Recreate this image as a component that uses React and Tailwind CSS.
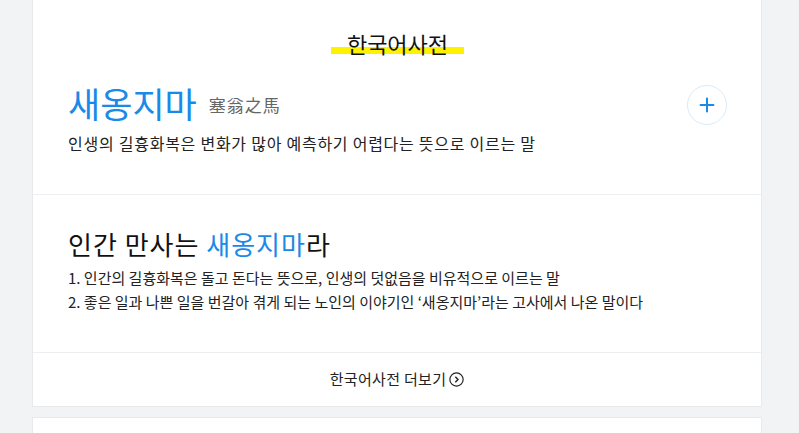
import { Plus } from 'lucide-react'

const FONT = { fontFamily: '"Noto Sans CJK KR", "Noto Sans", sans-serif' }

function MoreIcon() {
  return (
    <svg width="15" height="15" viewBox="0 0 14 14" fill="none" className="ml-[3px]">
      <circle cx="7" cy="7" r="6.2" stroke="#222" strokeWidth="1.1" />
      <path d="M5.9 4.4 L8.4 7 L5.9 9.6" stroke="#222" strokeWidth="1.3" />
    </svg>
  )
}

export default function App() {
  return (
    <div className="min-h-[433px] bg-[#f2f3f5]" style={FONT}>
      <div className="ml-[32px] w-[730px] bg-white border-x border-b border-[#e7e9ec]">
        <div className="pl-[35px] pr-[34px] pt-[29px] pb-[39px] border-b border-[#eceef0]">
          <div className="flex justify-center">
            <h2 className="relative px-[16px] text-[22px] leading-[28px] text-[#111]">
              <span className="absolute left-0 right-0 top-[18px] h-[7px] bg-[#fff200]" />
              <span className="relative">한국어사전</span>
            </h2>
          </div>
          <div className="mt-[23px] flex items-center justify-between">
            <div className="flex items-center">
              <span className="text-[35px] leading-[46px] text-[#1a8ae8]">새옹지마</span>
              <span className="ml-[12px] mt-[3px] text-[17px] leading-[22px] tracking-[1px] text-[#666]">塞翁之馬</span>
            </div>
            <button className="w-[40px] h-[40px] rounded-full border border-[#d9ebfa] flex items-center justify-center mt-[4px]">
              <Plus size={22} strokeWidth={2.2} color="#1a8ae8" />
            </button>
          </div>
          <p className="mt-[5px] text-[16px] leading-[24px] text-[#222] tracking-[0.75px]">
            인생의 길흉화복은 변화가 많아 예측하기 어렵다는 뜻으로 이르는 말
          </p>
        </div>
        <div className="px-[35px] pt-[31px] pb-[38px] border-b border-[#eceef0]">
          <h3 className="text-[26px] leading-[36px] text-[#111] tracking-[1px]">
            인간 만사는 <span className="text-[#1a8ae8]">새옹지마</span>라
          </h3>
          <ol className="mt-[4px] text-[15px] leading-[24px] text-[#222]">
            <li>1. 인간의 길흉화복은 돌고 돈다는 뜻으로, 인생의 덧없음을 비유적으로 이르는 말</li>
            <li>2. 좋은 일과 나쁜 일을 번갈아 겪게 되는 노인의 이야기인 ‘새옹지마’라는 고사에서 나온 말이다</li>
          </ol>
        </div>
        <div className="h-[53px] flex items-center justify-center text-[15px] text-[#222] tracking-[0.3px]">
          한국어사전 더보기
          <MoreIcon />
        </div>
      </div>
      <div className="ml-[32px] mt-[10px] w-[730px] h-[20px] bg-white border-x border-t border-[#e7e9ec]" />
    </div>
  )
}
